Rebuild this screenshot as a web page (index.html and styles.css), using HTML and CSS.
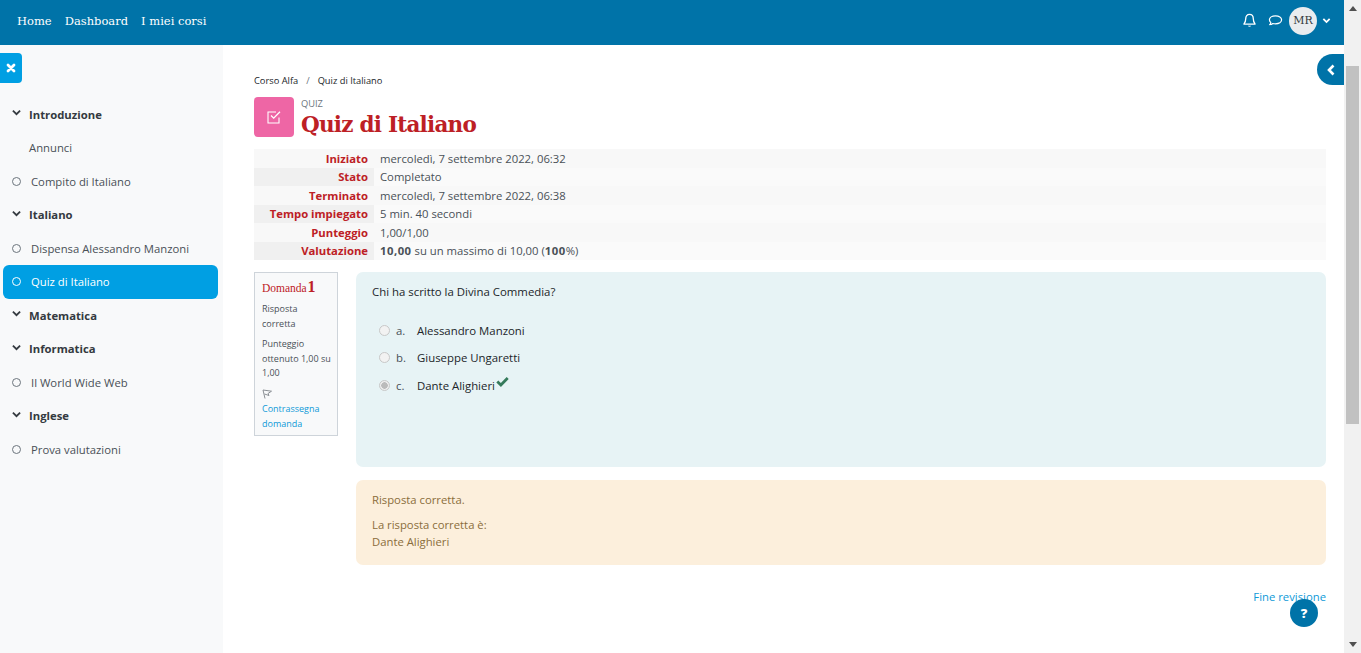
FILE: index.html
```html
<!DOCTYPE html>
<html lang="it">
<head>
    <meta charset="UTF-8">
    <title>Quiz di Italiano</title>
    <link rel="stylesheet" href="styles.css">
</head>
<body>
    <div class="page">
        <header class="navbar">
            <nav class="nav-links">
                <a>Home</a>
                <a>Dashboard</a>
                <a>I miei corsi</a>
            </nav>
            <div class="nav-user">
                <svg class="nav-icon" viewBox="0 0 16 16"><path d="M8 1.5c-2.6 0-4 1.9-4 4.3 0 3.4-.9 4.7-2 6h12c-1.100-1.300-2-2.600-2-6 0-2.400-1.400-4.300-4-4.300z" fill="none" stroke="#fff" stroke-width="1.400" stroke-linejoin="round"/><path d="M6.300 13.500a1.800 1.800 0 0 0 3.400 0z" fill="#fff"/></svg>
                <svg class="nav-icon" viewBox="0 0 16 16"><path d="M8 3c-3.700 0-6.500 1.800-6.500 4.300 0 1.100.6 2.100 1.500 2.800-.1.900-.6 1.700-1.200 2.300 1.300 0 2.500-.5 3.300-1.200.9.200 1.900.3 2.900.3 3.700 0 6.500-1.800 6.500-4.200S11.700 3 8 3z" fill="none" stroke="#fff" stroke-width="1.300" stroke-linejoin="round"/></svg>
                <span class="avatar">MR</span>
                <svg class="caret" viewBox="0 0 10 10"><path d="M1.500 3.200 5 6.700l3.500-3.500" fill="none" stroke="#fff" stroke-width="2"/></svg>
            </div>
        </header>

        <div class="body-row">
            <aside class="sidebar">
                <button class="close-btn"><svg viewBox="0 0 10 10"><path d="M2 2l6 6M8 2 2 8" stroke="#fff" stroke-width="2.800" stroke-linecap="round"/></svg></button>
                <ul class="course-index">
                    <li class="section"><svg viewBox="0 0 10 10"><path d="M1 2.800 5 6.800l4-4" fill="none" stroke="#343a40" stroke-width="2"/></svg>Introduzione</li>
                    <li class="plain">Annunci</li>
                    <li class="activity"><i class="dot"></i>Compito di Italiano</li>
                    <li class="section"><svg viewBox="0 0 10 10"><path d="M1 2.800 5 6.800l4-4" fill="none" stroke="#343a40" stroke-width="2"/></svg>Italiano</li>
                    <li class="activity"><i class="dot"></i>Dispensa Alessandro Manzoni</li>
                    <li class="activity current"><i class="dot"></i>Quiz di Italiano</li>
                    <li class="section"><svg viewBox="0 0 10 10"><path d="M1 2.800 5 6.800l4-4" fill="none" stroke="#343a40" stroke-width="2"/></svg>Matematica</li>
                    <li class="section"><svg viewBox="0 0 10 10"><path d="M1 2.800 5 6.800l4-4" fill="none" stroke="#343a40" stroke-width="2"/></svg>Informatica</li>
                    <li class="activity"><i class="dot"></i>Il World Wide Web</li>
                    <li class="section"><svg viewBox="0 0 10 10"><path d="M1 2.800 5 6.800l4-4" fill="none" stroke="#343a40" stroke-width="2"/></svg>Inglese</li>
                    <li class="activity"><i class="dot"></i>Prova valutazioni</li>
                </ul>
            </aside>

            <main class="content">
                <ol class="breadcrumb">
                    <li>Corso Alfa</li>
                    <li class="sep">/</li>
                    <li>Quiz di Italiano</li>
                </ol>

                <div class="page-head">
                    <div class="quiz-icon">
                        <svg viewBox="0 0 16 16"><path d="M13 8.500V14H2V3h8" fill="none" stroke="#fff" stroke-width="1.100"/><path d="M5 6.500 7.700 9.200 14 2.800" fill="none" stroke="#fff" stroke-width="1.300"/></svg>
                    </div>
                    <div>
                        <div class="kicker">QUIZ</div>
                        <h1>Quiz di Italiano</h1>
                    </div>
                </div>

                <table class="summary">
                    <tr><th>Iniziato</th><td>mercoledì, 7 settembre 2022, 06:32</td></tr>
                    <tr><th>Stato</th><td>Completato</td></tr>
                    <tr><th>Terminato</th><td>mercoledì, 7 settembre 2022, 06:38</td></tr>
                    <tr><th>Tempo impiegato</th><td>5 min. 40 secondi</td></tr>
                    <tr><th>Punteggio</th><td>1,00/1,00</td></tr>
                    <tr><th>Valutazione</th><td><b>10,00</b> su un massimo di 10,00 (<b>100</b>%)</td></tr>
                </table>

                <div class="question">
                    <div class="q-info">
                        <h3>Domanda <span>1</span></h3>
                        <p>Risposta corretta</p>
                        <p>Punteggio ottenuto 1,00 su 1,00</p>
                        <svg class="flag" viewBox="0 0 10 10"><path d="M1 1 9.500 2.200 6 4.500 7 6.500 2.500 5M1 1 3 9.500" fill="none" stroke="#8a8f94" stroke-width="1"/></svg>
                        <a>Contrassegna domanda</a>
                    </div>
                    <div class="q-main">
                        <div class="q-box">
                            <p class="q-text">Chi ha scritto la Divina Commedia?</p>
                            <div class="answer"><i class="radio"></i><span class="letter">a.</span>Alessandro Manzoni</div>
                            <div class="answer"><i class="radio"></i><span class="letter">b.</span>Giuseppe Ungaretti</div>
                            <div class="answer"><i class="radio checked"></i><span class="letter">c.</span>Dante Alighieri<svg class="tick" viewBox="0 0 12 10"><path d="M1.200 5 4.500 8.200 10.800 1.800" fill="none" stroke="#357a5b" stroke-width="2.600"/></svg></div>
                        </div>
                        <div class="feedback">
                            <p>Risposta corretta.</p>
                            <p class="right-answer">La risposta corretta è:<br>Dante Alighieri</p>
                        </div>
                    </div>
                </div>

                <div class="finish"><a>Fine revisione</a></div>
            </main>
        </div>

        <button class="drawer-toggle"><svg viewBox="0 0 10 12"><path d="M7.500 1.500 3 6l4.500 4.500" fill="none" stroke="#fff" stroke-width="2.600"/></svg></button>
        <button class="help-btn">?</button>
    </div>

    <div class="scrollbar">
        <svg class="arrow" viewBox="0 0 8 5"><path d="M4 0 8 5H0z" fill="#505050"/></svg>
        <div class="track"><div class="thumb"></div></div>
        <svg class="arrow" viewBox="0 0 8 5"><path d="M0 0h8L4 5z" fill="#505050"/></svg>
    </div>
</body>
</html>
```

FILE: styles.css
```css
:root {
    --primary: #0073a8;
    --sky: #009fe3;
    --red: #bd2025;
    --text: #495057;
    --dark: #343a40;
}

* {
    margin: 0;
    padding: 0;
    box-sizing: border-box;
}

html, body {
    height: 653px;
    overflow: hidden;
}

body {
    display: flex;
    font-family: "Open Sans", sans-serif;
    font-size: 11.300px;
    color: var(--text);
    background: #fff;
}

.page {
    position: relative;
    flex: 1;
    min-width: 0;
    display: flex;
    flex-direction: column;
}

/* top bar */
.navbar {
    height: 45px;
    flex: none;
    background: var(--primary);
    display: flex;
    align-items: center;
    justify-content: space-between;
    padding: 0 13px 4px 17px;
    color: #fff;
}

.nav-links {
    display: flex;
    gap: 13px;
    font-family: "DejaVu Serif", serif;
    font-size: 11.500px;
}

.nav-user {
    display: flex;
    align-items: center;
}

.nav-icon {
    width: 15px;
    height: 15px;
    margin-right: 11px;
}

.nav-icon + .nav-icon {
    margin-right: 6px;
}

.avatar {
    width: 28px;
    height: 28px;
    border-radius: 50%;
    background: #e9ecef;
    color: var(--dark);
    font-family: "DejaVu Serif", serif;
    font-size: 11px;
    display: flex;
    align-items: center;
    justify-content: center;
}

.caret {
    width: 9px;
    height: 9px;
    margin-left: 5px;
}

.body-row {
    flex: 1;
    display: flex;
    min-height: 0;
}

/* left course index */
.sidebar {
    width: 223px;
    flex: none;
    background: #f8f9fa;
    padding-top: 8px;
}

.close-btn {
    display: flex;
    align-items: center;
    justify-content: center;
    width: 22px;
    height: 30px;
    border: none;
    border-radius: 0 4px 4px 0;
    background: var(--sky);
    margin-bottom: 14.500px;
}

.close-btn svg {
    width: 10px;
    height: 10px;
}

.course-index {
    list-style: none;
    padding: 0 5px 0 3px;
}

.course-index li {
    height: 33.500px;
    display: flex;
    align-items: center;
    border-radius: 6px;
}

.section {
    font-weight: 700;
    color: var(--dark);
    padding-left: 9px;
}

.section svg {
    width: 9px;
    height: 9px;
    margin-right: 8px;
    margin-top: -3px;
}

.plain {
    padding-left: 26px;
}

.activity {
    padding-left: 9px;
}

.dot {
    width: 9px;
    height: 9px;
    border: 1px solid #6c757d;
    border-radius: 50%;
    margin-right: 10px;
}

.course-index .current {
    background: var(--sky);
    color: #fff;
}

.current .dot {
    border-color: #fff;
}

/* main column */
.content {
    flex: 1;
    min-width: 0;
    padding: 29px 18px 0 31px;
}

.breadcrumb {
    list-style: none;
    display: flex;
    gap: 8px;
    font-size: 9.300px;
    line-height: 13px;
    color: #212529;
    margin-bottom: 10px;
}

.breadcrumb .sep {
    color: #6c757d;
}

.page-head {
    display: flex;
    align-items: flex-start;
    gap: 7px;
    height: 52px;
}

.quiz-icon {
    width: 40px;
    height: 40px;
    border-radius: 4px;
    background: #ee66a5;
    display: flex;
    align-items: center;
    justify-content: center;
}

.quiz-icon svg {
    width: 16px;
    height: 16px;
}

.kicker {
    font-size: 9.300px;
    line-height: 13px;
    color: #6c757d;
}

h1 {
    font-family: "DejaVu Serif", serif;
    font-size: 21.500px;
    line-height: 29px;
    font-weight: 700;
    letter-spacing: -0.750px;
    color: var(--red);
}

.summary {
    width: 100%;
    border-collapse: collapse;
    background: #f8f8f8;
    line-height: 16px;
}

.summary tr {
    height: 18.500px;
}

.summary th,
.summary td {
    padding-top: 1px;
}

.summary th {
    width: 120px;
    text-align: right;
    padding-right: 6px;
    color: var(--red);
    font-weight: 700;
}

.summary td {
    padding-left: 6px;
}

.summary b {
    letter-spacing: 0.500px;
}

.summary tr:nth-child(even) th {
    background: #f0f0f0;
}

.summary tr:nth-child(even) td {
    background: #fafafa;
}

/* question */
.question {
    display: flex;
    gap: 18px;
    margin-top: 12px;
}

.q-info {
    width: 84px;
    height: 164px;
    flex: none;
    background: #f8f9fa;
    border: 1px solid #ced4da;
    padding: 5px 4px 5px 7px;
    font-size: 9px;
    line-height: 14.500px;
}

.q-info h3 {
    font-family: "Liberation Serif", serif;
    font-weight: 400;
    font-size: 11.500px;
    line-height: 18px;
    color: var(--red);
    margin-bottom: 5px;
}

.q-info h3 span {
    font-weight: 700;
    font-size: 16px;
    margin-left: -2px;
}

.q-info p {
    margin-bottom: 6px;
}

.flag {
    display: block;
    width: 10px;
    height: 10px;
    margin: 8px 0 2px;
}

.q-info a {
    display: block;
    line-height: 15px;
    color: #0f9ad8;
}

.q-main {
    flex: 1;
    min-width: 0;
}

.q-box {
    height: 195px;
    background: #e7f3f5;
    border-radius: 7px;
    padding: 12px 16px;
    font-size: 11.400px;
    color: #212529;
}

.q-text {
    line-height: 16px;
    margin-bottom: 17px;
}

.answer {
    display: flex;
    align-items: center;
    height: 27.300px;
    padding-left: 7px;
}

.radio {
    width: 11px;
    height: 11px;
    border: 1px solid #c8c8c8;
    border-radius: 50%;
    background: #f2f2f2;
    margin-right: 6px;
}

.radio.checked {
    background: radial-gradient(circle, #bbb 0 3px, #eee 3.500px);
}

.letter {
    width: 21px;
    color: var(--text);
}

.tick {
    width: 13px;
    height: 11px;
    margin: -7px 0 0 1px;
}

.feedback {
    height: 85px;
    margin-top: 13px;
    background: #fcefdc;
    border-radius: 7px;
    padding: 12px 16px;
    color: #8a6d3b;
    line-height: 16px;
}

.feedback .right-answer {
    margin-top: 8px;
    line-height: 17px;
}

.finish {
    margin-top: 24px;
    text-align: right;
    color: #0f9ad8;
    line-height: 16px;
}

/* floating buttons */
.drawer-toggle {
    position: absolute;
    top: 54px;
    right: 0;
    width: 27px;
    height: 31px;
    border: none;
    border-radius: 16px 0 0 16px;
    background: var(--primary);
    display: flex;
    align-items: center;
    justify-content: center;
}

.drawer-toggle svg {
    width: 10px;
    height: 12px;
}

.help-btn {
    position: absolute;
    right: 26px;
    bottom: 26px;
    width: 28px;
    height: 28px;
    border: none;
    border-radius: 50%;
    background: var(--primary);
    color: #fff;
    font-family: "Open Sans", sans-serif;
    font-size: 13px;
    font-weight: 800;
}

/* window scrollbar */
.scrollbar {
    width: 17px;
    flex: none;
    background: #f1f1f1;
    display: flex;
    flex-direction: column;
    align-items: center;
}

.arrow {
    width: 8px;
    height: 5px;
    margin: 6px 0;
    flex: none;
}

.track {
    flex: 1;
    width: 100%;
    padding: 49px 2px 212px;
}

.thumb {
    height: 100%;
    background: #c1c1c1;
}
```
